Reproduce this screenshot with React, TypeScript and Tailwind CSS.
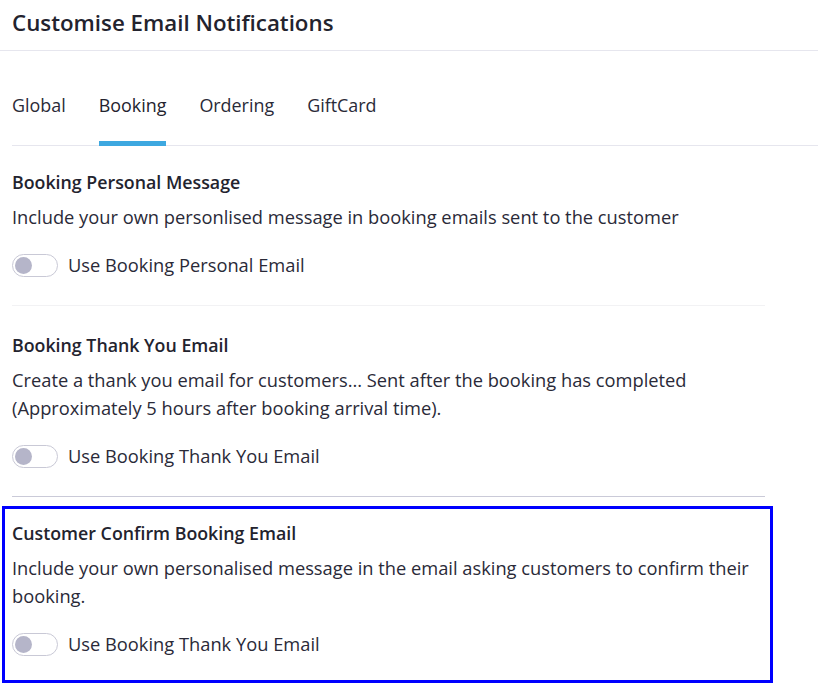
const SECTIONS_TOP = [
  {
    title: "Booking Personal Message",
    desc: "Include your own personlised message in booking emails sent to the customer",
    label: "Use Booking Personal Email",
  },
  {
    title: "Booking Thank You Email",
    desc: "Create a thank you email for customers... Sent after the booking has completed (Approximately 5 hours after booking arrival time).",
    label: "Use Booking Thank You Email",
  },
];

const TABS = ["Global", "Booking", "Ordering", "GiftCard"];

function Toggle() {
  return (
    <span className="flex h-[23px] w-[46px] shrink-0 items-center rounded-full border border-[#c9c9d6] bg-white px-[2px]">
      <span className="h-[17px] w-[17px] rounded-full bg-[#b5b5c9]" />
    </span>
  );
}

function Section({ title, desc, label }: { title: string; desc: string; label: string }) {
  return (
    <div>
      <h3 className="text-[17.8px] font-semibold leading-[24px] text-[#23232e]">{title}</h3>
      <p className="mt-[9px] text-[18.3px] leading-[28px] text-[#2a2a38]">{desc}</p>
      <div className="mt-[22px] flex items-center gap-[10px]">
        <Toggle />
        <span className="text-[18.3px] leading-[24px] text-[#2a2a38]">{label}</span>
      </div>
    </div>
  );
}

export default function App() {
  return (
    <div className="min-h-screen bg-white font-['Open_Sans',sans-serif]">
      {/* Header */}
      <div className="border-b border-[#e6e6ee] px-[12px] pb-[12px] pt-[8px]">
        <h1 className="text-[22.3px] font-semibold leading-[30px] text-[#23232e]">
          Customise Email Notifications
        </h1>
      </div>

      {/* Tabs */}
      <div className="ml-[12px] mt-[42px] flex gap-[33px] border-b border-[#e6e6ee]">
        {TABS.map((t) => (
          <div
            key={t}
            className={
              t === "Booking"
                ? "-mb-px border-b-[5px] border-[#3da8e0] pb-[24px] text-[17.9px] leading-[24px] text-[#23232e]"
                : "-mb-px border-b-[5px] border-transparent pb-[24px] text-[17.9px] leading-[24px] text-[#2a2a38]"
            }
          >
            {t}
          </div>
        ))}
      </div>

      <div className="w-[765px] pl-[12px] pt-[24px]">
        <Section {...SECTIONS_TOP[0]} />
        <div className="mb-[27px] mt-[28px] h-px bg-[#f2f2f4]" />
        <Section {...SECTIONS_TOP[1]} />
        <div className="mt-[28px] h-px bg-[#cacad8]" />
      </div>

      {/* Highlighted section */}
      <div className="ml-[2px] mt-[9px] w-[771px] border-[3px] border-[#0000ff] px-[7px] pb-[24px] pt-[12px]">
        <Section
          title="Customer Confirm Booking Email"
          desc="Include your own personalised message in the email asking customers to confirm their booking."
          label="Use Booking Thank You Email"
        />
      </div>
    </div>
  );
}
